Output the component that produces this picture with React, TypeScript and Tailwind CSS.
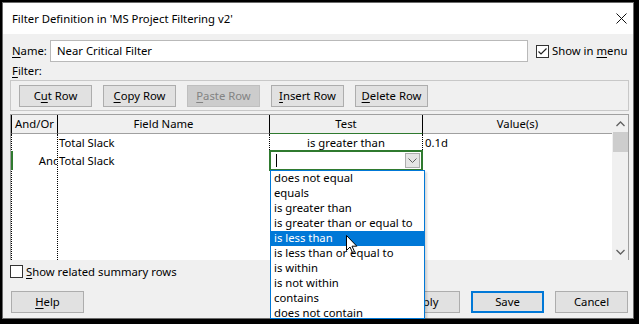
import React from 'react';

const FONT = "font-['Segoe_UI','Noto_Sans',sans-serif]";

function K({ text, k }: { text: string; k: number }) {
  return (
    <>
      {text.slice(0, k)}
      <span className="underline underline-offset-[2px]">{text[k]}</span>
      {text.slice(k + 1)}
    </>
  );
}

function Button({ text, k, disabled, primary }: { text: string; k: number; disabled?: boolean; primary?: boolean }) {
  const cls = disabled
    ? 'bg-[#cccccc] border border-[#bfbfbf] text-[#838383]'
    : primary
    ? 'bg-[#e1e1e1] border-2 border-[#0078d7] text-black'
    : 'bg-[#e1e1e1] border border-[#adadad] text-black';
  return (
    <div className={`w-[73px] h-[22px] shrink-0 flex items-center justify-center leading-none ${cls}`}>
      {k >= 0 ? <K text={text} k={k} /> : text}
    </div>
  );
}

function Check({ checked }: { checked?: boolean }) {
  return (
    <div className="w-[13px] h-[13px] shrink-0 border border-[#333333] bg-white flex items-center justify-center">
      {checked && (
        <svg width="11" height="11" viewBox="0 0 11 11">
          <path d="M1.5 5.5 L4 8 L9.5 2.5" fill="none" stroke="#222" strokeWidth="1.2" />
        </svg>
      )}
    </div>
  );
}

const items = [
  'does not equal',
  'equals',
  'is greater than',
  'is greater than or equal to',
  'is less than',
  'is less than or equal to',
  'is within',
  'is not within',
  'contains',
  'does not contain',
];

export default function App() {
  return (
    <div className={`relative w-[639px] h-[324px] bg-black pt-[2px] pl-[2px] overflow-hidden text-[11.3px] text-black ${FONT}`}>
      <div className="relative w-[632px] h-[317px] border border-[#6b6b6b] bg-[#f0f0f0] flex flex-col">
        {/* title bar */}
        <div className="h-[31px] bg-white flex items-center pl-[9px] pr-[6px] shrink-0">
          <span className="flex-1 leading-none">Filter Definition in 'MS Project Filtering v2'</span>
          <svg width="11" height="11" viewBox="0 0 11 11">
            <path d="M0.5 0.5 L10.5 10.5 M10.5 0.5 L0.5 10.5" stroke="#111" strokeWidth="1" />
          </svg>
        </div>

        {/* name row */}
        <div className="mt-[6px] h-[22px] flex items-center pl-[9px]">
          <span className="w-[38px] leading-none"><K text="Name:" k={0} /></span>
          <div className="w-[478px] h-[22px] bg-white border border-[#b9b9b9] flex items-center pl-[6px] leading-none">
            Near Critical Filter
          </div>
          <div className="ml-[8px] flex items-center gap-[3px] whitespace-nowrap">
            <Check checked />
            <span className="leading-none"><K text="Show in menu" k={8} /></span>
          </div>
        </div>

        <div className="mt-[2px] h-[14px] pl-[9px] flex items-center leading-none"><K text="Filter:" k={0} /></div>

        {/* toolbar group */}
        <div className="mt-[2px] ml-[7px] w-[619px] h-[31px] border border-[#c8c8c8] flex gap-[11px] pl-[8px] pt-[4px]">
          <Button text="Cut Row" k={1} />
          <Button text="Copy Row" k={0} />
          <Button text="Paste Row" k={0} disabled />
          <Button text="Insert Row" k={0} />
          <Button text="Delete Row" k={0} />
        </div>

        {/* grid */}
        <div className="relative mt-[3px] ml-[7px] w-[619px] h-[146px] border-t border-l border-r border-[#a0a0a0] flex">
          <div className="flex flex-col w-[601px]">
            <div className="h-[19px] flex shrink-0 bg-[#f0f0f0]">
              <div className="w-[47px] border-l border-r border-black border-b border-b-[#a0a0a0] flex items-center justify-center leading-none">And/Or</div>
              <div className="w-[212px] border-r border-black border-b border-b-[#a0a0a0] flex items-center justify-center leading-none">Field Name</div>
              <div className="w-[153px] border-r border-black border-b border-b-[#2f7a2f] flex items-center justify-center leading-none">Test</div>
              <div className="flex-1 border-b border-[#a0a0a0] flex items-center justify-center leading-none">Value(s)</div>
            </div>
            <div className="flex-1 bg-white flex">
              <div className="w-[47px] h-full border-l border-r border-dotted border-black flex flex-col">
                <div className="h-[18px]" />
                <div className="h-[18px] overflow-hidden flex items-center justify-end leading-none whitespace-nowrap">
                  <span className="-mr-[3px] -mt-[1px]">And</span>
                </div>
              </div>
              <div className="flex-1 flex flex-col">
                <div className="h-[18px] flex">
                  <div className="w-[212px] border-r border-dotted border-black pl-[1px] flex items-center leading-none">Total Slack</div>
                  <div className="w-[153px] border-r border-dotted border-black flex items-center justify-center leading-none">is greater than</div>
                  <div className="flex-1 pl-[2px] flex items-center leading-none">0.1d</div>
                </div>
                <div className="h-[18px] flex">
                  <div className="w-[212px] pl-[1px] pb-[1px] flex items-center leading-none">Total Slack</div>
                </div>
              </div>
            </div>
          </div>
          {/* scrollbar */}
          <div className="w-[16px] bg-[#f0f0f0] flex flex-col items-center">
            <div className="h-[17px] flex items-center justify-center">
              <svg width="9" height="6" viewBox="0 0 9 6"><path d="M0.5 5 L4.5 1 L8.5 5" fill="none" stroke="#606060" strokeWidth="1.3" /></svg>
            </div>
            <div className="w-[15px] h-[20px] bg-[#cdcdcd]" />
            <div className="flex-1" />
            <div className="h-[17px] flex items-center justify-center">
              <svg width="9" height="6" viewBox="0 0 9 6"><path d="M0.5 1 L4.5 5 L8.5 1" fill="none" stroke="#606060" strokeWidth="1.3" /></svg>
            </div>
          </div>

          {/* active row marker */}
          <div className="absolute left-0 top-[36px] w-[2px] h-[19px] bg-[#2f7a2f]" />
          {/* editor */}
          <div className="absolute left-[258px] top-[35px] w-[154px] h-[21px] border-2 border-[#2f7a2f] bg-white flex items-center pl-[5px]">
            <div className="w-[1px] h-[13px] bg-black" />
            <div className="ml-auto mr-[1px] w-[15px] h-[15px] border border-[#adadad] bg-[#e5e5e5] flex items-center justify-center">
              <svg width="9" height="5" viewBox="0 0 9 5"><path d="M0.5 0.5 L4.5 4.5 L8.5 0.5" fill="none" stroke="#606060" strokeWidth="1" /></svg>
            </div>
          </div>
        </div>

        {/* summary rows */}
        <div className="mt-[5px] ml-[7px] h-[13px] flex items-center gap-[3px]">
          <Check />
          <span className="leading-none"><K text="Show related summary rows" k={0} /></span>
        </div>

        {/* bottom buttons */}
        <div className="mt-[13px] pl-[8px] flex">
          <Button text="Help" k={0} />
          <div className="flex-1" />
          <div className="flex gap-[11px] pr-[5px]">
            <Button text="Apply" k={0} />
            <Button text="Save" k={-1} primary />
            <Button text="Cancel" k={-1} />
          </div>
        </div>
      </div>

      {/* dropdown list */}
      <div className="absolute left-[270px] top-[170px] w-[155px] h-[149px] bg-white border border-[#0078d7] shadow-[2px_2px_2px_rgba(0,0,0,0.15)]">
        {items.map((t, i) => (
          <div
            key={t}
            className={`h-[15px] pl-[3px] pb-[1px] flex items-center leading-none whitespace-nowrap ${i === 4 ? 'bg-[#0078d7] text-white' : ''}`}
          >
            {t}
          </div>
        ))}
      </div>

      {/* mouse pointer */}
      <svg className="absolute left-[346px] top-[235px]" width="12" height="19" viewBox="0 0 12 19">
        <path d="M0.5 0.5 L0.5 15.5 L4 12 L6.5 17.5 L8.5 16.5 L6 11.2 L10.8 11.2 Z" fill="white" stroke="black" strokeWidth="1" strokeLinejoin="round" />
      </svg>
    </div>
  );
}
